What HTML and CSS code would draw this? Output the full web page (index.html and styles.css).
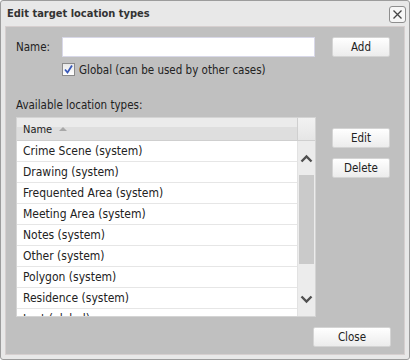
FILE: index.html
```html
<!DOCTYPE html>
<html>
    <head>
        <title>Edit target location types</title>
        <meta charset="UTF-8">
        <link rel="stylesheet" href="styles.css">
    </head>
    <body>
        <div class="dialog">
            <div class="titlebar">
                <span class="title">Edit target location types</span>
                <span class="close-x">
                    <svg width="11" height="11" viewBox="0 0 11 11"><path d="M1.5 1.5 L9.5 9.5 M9.5 1.5 L1.5 9.5" stroke="#444" stroke-width="1.3" fill="none"/></svg>
                </span>
            </div>
            <div class="panel">
                <div class="name-row">
                    <label class="name-label">Name:</label>
                    <input type="text" class="name-input">
                    <button class="btn btn-add">Add</button>
                </div>
                <div class="check-row">
                    <span class="checkbox">
                        <svg width="11" height="11" viewBox="0 0 11 11"><path d="M2 5.5 L4.5 8.5 L9 1.5" stroke="#3858b8" stroke-width="1.8" fill="none"/></svg>
                    </span>
                    <span>Global (can be used by other cases)</span>
                </div>
                <div class="list-label">Available location types:</div>
                <div class="main-row">
                    <div class="grid">
                        <div class="grid-head">
                            <div class="head-cell">Name <span class="sort-arrow"></span></div>
                            <div class="head-spacer"></div>
                        </div>
                        <div class="grid-body">
                            <div class="rows">
                                <div class="row">Crime Scene (system)</div>
                                <div class="row">Drawing (system)</div>
                                <div class="row">Frequented Area (system)</div>
                                <div class="row">Meeting Area (system)</div>
                                <div class="row">Notes (system)</div>
                                <div class="row">Other (system)</div>
                                <div class="row">Polygon (system)</div>
                                <div class="row">Residence (system)</div>
                                <div class="row">Lost (global)</div>
                            </div>
                            <div class="scrollbar">
                                <div class="scroll-btn">
                                    <svg width="13" height="9" viewBox="0 0 13 9"><path d="M1.5 7.5 L6.5 2.5 L11.5 7.5" stroke="#505050" stroke-width="2.4" fill="none"/></svg>
                                </div>
                                <div class="scroll-track">
                                    <div class="scroll-thumb"></div>
                                </div>
                                <div class="scroll-btn">
                                    <svg width="13" height="9" viewBox="0 0 13 9"><path d="M1.5 1.5 L6.5 6.5 L11.5 1.5" stroke="#505050" stroke-width="2.4" fill="none"/></svg>
                                </div>
                            </div>
                        </div>
                    </div>
                    <div class="side-buttons">
                        <button class="btn">Edit</button>
                        <button class="btn">Delete</button>
                    </div>
                </div>
                <div class="footer">
                    <button class="btn btn-close">Close</button>
                </div>
            </div>
        </div>
    </body>
</html>
```

FILE: styles.css
```css
body {
    margin: 0;
    font-family: "DejaVu Sans Condensed", "DejaVu Sans", sans-serif;
    font-size: 11.5px;
    color: #222;
}
.dialog {
    width: 410px;
    height: 360px;
    box-sizing: border-box;
    border: 1px solid #9c9c9c;
    border-radius: 3px;
    background: #e8e8e8;
    padding: 0 4px 4px 4px;
    display: flex;
    flex-direction: column;
}
.titlebar {
    height: 25px;
    display: flex;
    align-items: center;
    justify-content: space-between;
    padding-left: 2px;
}
.title {
    font-weight: bold;
    font-size: 11px;
    color: #333;
}
.close-x {
    width: 15px;
    height: 15px;
    border: 1px solid #8e8e8e;
    border-radius: 3px;
    background: #f6f6f6;
    display: flex;
    align-items: center;
    justify-content: center;
    margin-right: -1px;
    margin-top: 1px;
}
.panel {
    flex: 1;
    background: #c0c0c0;
    border: 1px solid #d6cfcf;
    padding: 10px 13px 0 10px;
    display: flex;
    flex-direction: column;
}
.name-row {
    display: flex;
    align-items: center;
    height: 20px;
}
.name-label {
    width: 46px;
}
.name-input {
    width: 253px;
    height: 20px;
    box-sizing: border-box;
    border: 1px solid #d8d8e8;
    background: #fff;
    margin: 0;
}
.btn {
    width: 58px;
    height: 20px;
    box-sizing: border-box;
    border: 1px solid #d4d4d4;
    border-radius: 2px;
    background: linear-gradient(#ffffff, #ececec);
    font-family: inherit;
    font-size: 11.5px;
    color: #222;
    padding: 0;
}
.btn-add {
    margin-left: 17px;
}
.check-row {
    display: flex;
    align-items: center;
    margin-top: 6px;
    margin-left: 46px;
    height: 13px;
}
.checkbox {
    width: 11px;
    height: 11px;
    border: 1px solid #8a8a8a;
    background: linear-gradient(#e8e8e8, #ffffff);
    margin-right: 4px;
    display: flex;
}
.list-label {
    margin-top: 22px;
    height: 14px;
    line-height: 14px;
}
.main-row {
    display: flex;
    margin-top: 5px;
}
.grid {
    width: 300px;
    height: 200px;
    box-sizing: border-box;
    border: 1px solid #d4d4d4;
    background: #fff;
    display: flex;
    flex-direction: column;
}
.grid-head {
    height: 23px;
    box-sizing: border-box;
    display: flex;
    border-bottom: 1px solid #cfcfcf;
    background: linear-gradient(#ebebeb 0, #ebebeb 40%, #dedede 40%, #dedede 100%);
    font-size: 11px;
}
.head-cell {
    flex: 1;
    padding-left: 6px;
    display: flex;
    align-items: center;
    border-right: 1px solid #cfcfcf;
}
.sort-arrow {
    width: 0;
    height: 0;
    border-left: 4px solid transparent;
    border-right: 4px solid transparent;
    border-bottom: 4px solid #a8a8a8;
    margin-left: 7px;
    margin-top: -1px;
}
.head-spacer {
    width: 17px;
    background: linear-gradient(#f2f2f2, #e6e6e6);
}
.grid-body {
    flex: 1;
    display: flex;
    overflow: hidden;
}
.rows {
    flex: 1;
    border-right: 1px solid #e2e2e2;
    font-size: 12px;
}
.row {
    height: 20px;
    line-height: 20px;
    border-bottom: 1px solid #e6e6e6;
    padding-left: 6px;
    white-space: nowrap;
}
.scrollbar {
    width: 17px;
    background: #ececec;
    display: flex;
    flex-direction: column;
}
.scroll-btn {
    height: 34px;
    display: flex;
    align-items: center;
    justify-content: center;
}
.scroll-track {
    flex: 1;
    padding: 0 1px;
}
.scroll-thumb {
    height: 89px;
    background: #cacaca;
}
.side-buttons {
    display: flex;
    flex-direction: column;
    gap: 10px;
    margin-left: 16px;
    margin-top: 11px;
}
.footer {
    display: flex;
    justify-content: flex-end;
    margin-top: 10px;
}
.btn-close {
    width: 78px;
}
```
